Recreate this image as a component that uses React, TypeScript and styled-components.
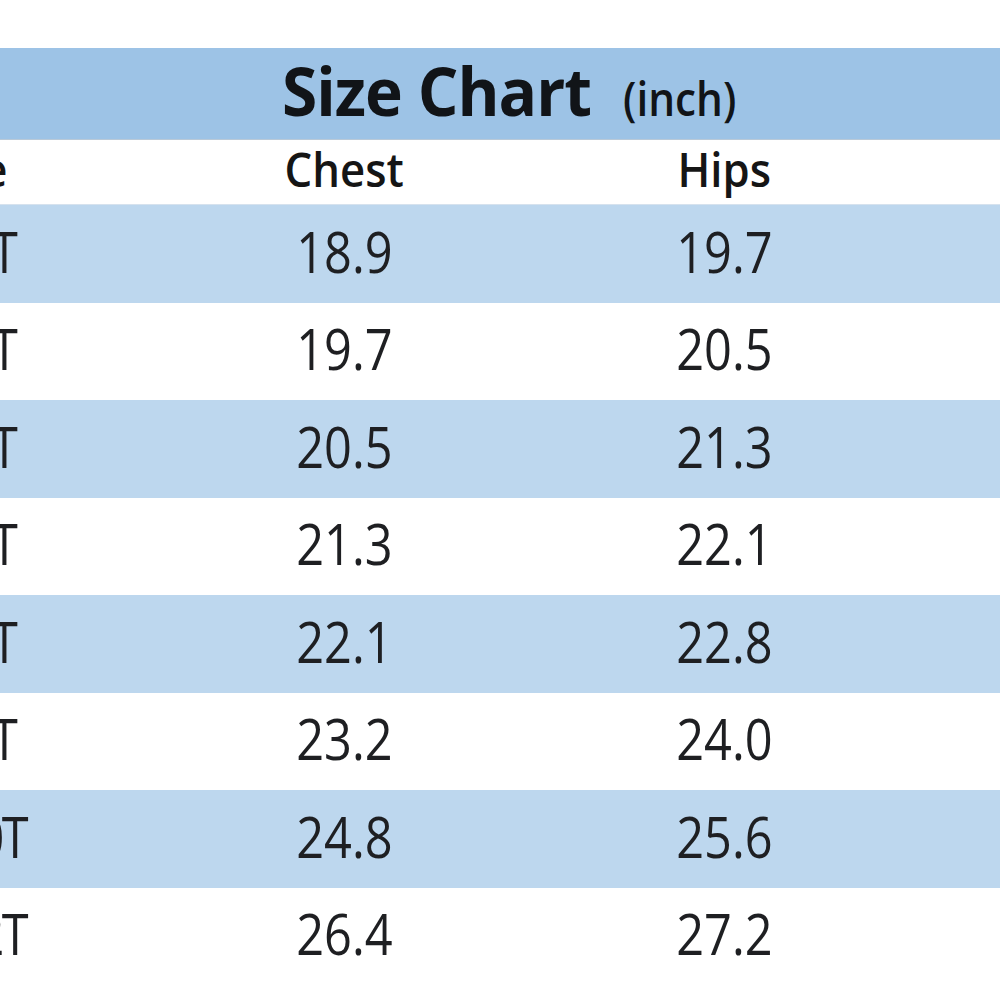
import React from "react";
import styled, { createGlobalStyle } from "styled-components";

const Global = createGlobalStyle`
  html, body {
    margin: 0;
    padding: 0;
    background: #ffffff;
    overflow: hidden;
  }
  body {
    font-family: "Open Sans", "Noto Sans", "Liberation Sans", sans-serif;
    color: #1b1b1b;
  }
`;

const Page = styled.div`
  width: 1000px;
  height: 1000px;
  padding-top: 48px;
  box-sizing: border-box;
  display: flex;
  flex-direction: column;
`;

const TitleBand = styled.div`
  height: 92px;
  background: #9dc3e6;
  border-bottom: 1px solid #b9c9d8;
  box-sizing: border-box;
  display: flex;
  align-items: center;
  justify-content: flex-start;
  padding-left: 282px;
  padding-bottom: 8px;
`;

const TitleText = styled.div`
  display: flex;
  align-items: baseline;
  gap: 22px;
  color: #111418;
`;

const TitleMain = styled.span`
  display: inline-block;
  font-size: 66px;
  font-weight: 700;
  letter-spacing: -1px;
  line-height: 1;
  transform: scaleX(0.97);
  transform-origin: left center;
`;

const TitleUnit = styled.span`
  display: inline-block;
  font-size: 47px;
  font-weight: 600;
  line-height: 1;
  transform: scaleX(0.9);
  transform-origin: left center;
`;

const Row = styled.div<{ $shade: boolean; $h: number; $line?: boolean }>`
  height: ${(p) => p.$h}px;
  background: ${(p) => (p.$shade ? "#bdd7ee" : "#ffffff")};
  display: grid;
  grid-template-columns: 154px 380px 380px 1fr;
  align-items: center;
  box-sizing: border-box;
  padding-bottom: 6px;
  ${(p) => (p.$line ? "border-bottom: 1px solid #d6e2ee;" : "")}
`;

const SizeCell = styled.div<{ $edge: number }>`
  display: flex;
  justify-content: flex-end;
  padding-right: ${(p) => p.$edge}px;
  white-space: nowrap;
`;

const ValueCell = styled.div`
  display: flex;
  justify-content: center;
  white-space: nowrap;
`;

const HeadText = styled.span<{ $origin?: string }>`
  display: inline-block;
  font-size: 47px;
  font-weight: 600;
  line-height: 1;
  color: #151515;
  transform: scaleX(0.93);
  transform-origin: ${(p) => p.$origin || "center"} center;
`;

const Num = styled.span<{ $origin?: string; $tight?: boolean }>`
  display: inline-block;
  font-size: 56px;
  font-weight: 400;
  line-height: 1;
  color: #1e1f22;
  letter-spacing: ${(p) => (p.$tight ? "-3px" : "0")};
  transform: scaleX(0.87);
  transform-origin: ${(p) => p.$origin || "center"} center;
`;

const rows = [
  { size: "3T", chest: "18.9", hips: "19.7" },
  { size: "4T", chest: "19.7", hips: "20.5" },
  { size: "5T", chest: "20.5", hips: "21.3" },
  { size: "6T", chest: "21.3", hips: "22.1" },
  { size: "7T", chest: "22.1", hips: "22.8" },
  { size: "8T", chest: "23.2", hips: "24.0" },
  { size: "10T", chest: "24.8", hips: "25.6" },
  { size: "12T", chest: "26.4", hips: "27.2" },
];

export default function App() {
  return (
    <>
      <Global />
      <Page>
        <TitleBand>
          <TitleText>
            <TitleMain>Size Chart</TitleMain>
            <TitleUnit>(inch)</TitleUnit>
          </TitleText>
        </TitleBand>
        <Row $shade={false} $h={65} $line>
          <SizeCell $edge={146}>
            <HeadText $origin="right">Size</HeadText>
          </SizeCell>
          <ValueCell>
            <HeadText>Chest</HeadText>
          </ValueCell>
          <ValueCell>
            <HeadText>Hips</HeadText>
          </ValueCell>
          <div />
        </Row>
        {rows.map((r, i) => {
          const wide = r.size.length > 2;
          return (
            <Row key={r.size} $shade={i % 2 === 0} $h={97.5}>
              <SizeCell $edge={wide ? 128 : 136}>
                <Num $origin="right" $tight={wide}>
                  {r.size}
                </Num>
              </SizeCell>
              <ValueCell>
                <Num>{r.chest}</Num>
              </ValueCell>
              <ValueCell>
                <Num>{r.hips}</Num>
              </ValueCell>
              <div />
            </Row>
          );
        })}
      </Page>
    </>
  );
}
